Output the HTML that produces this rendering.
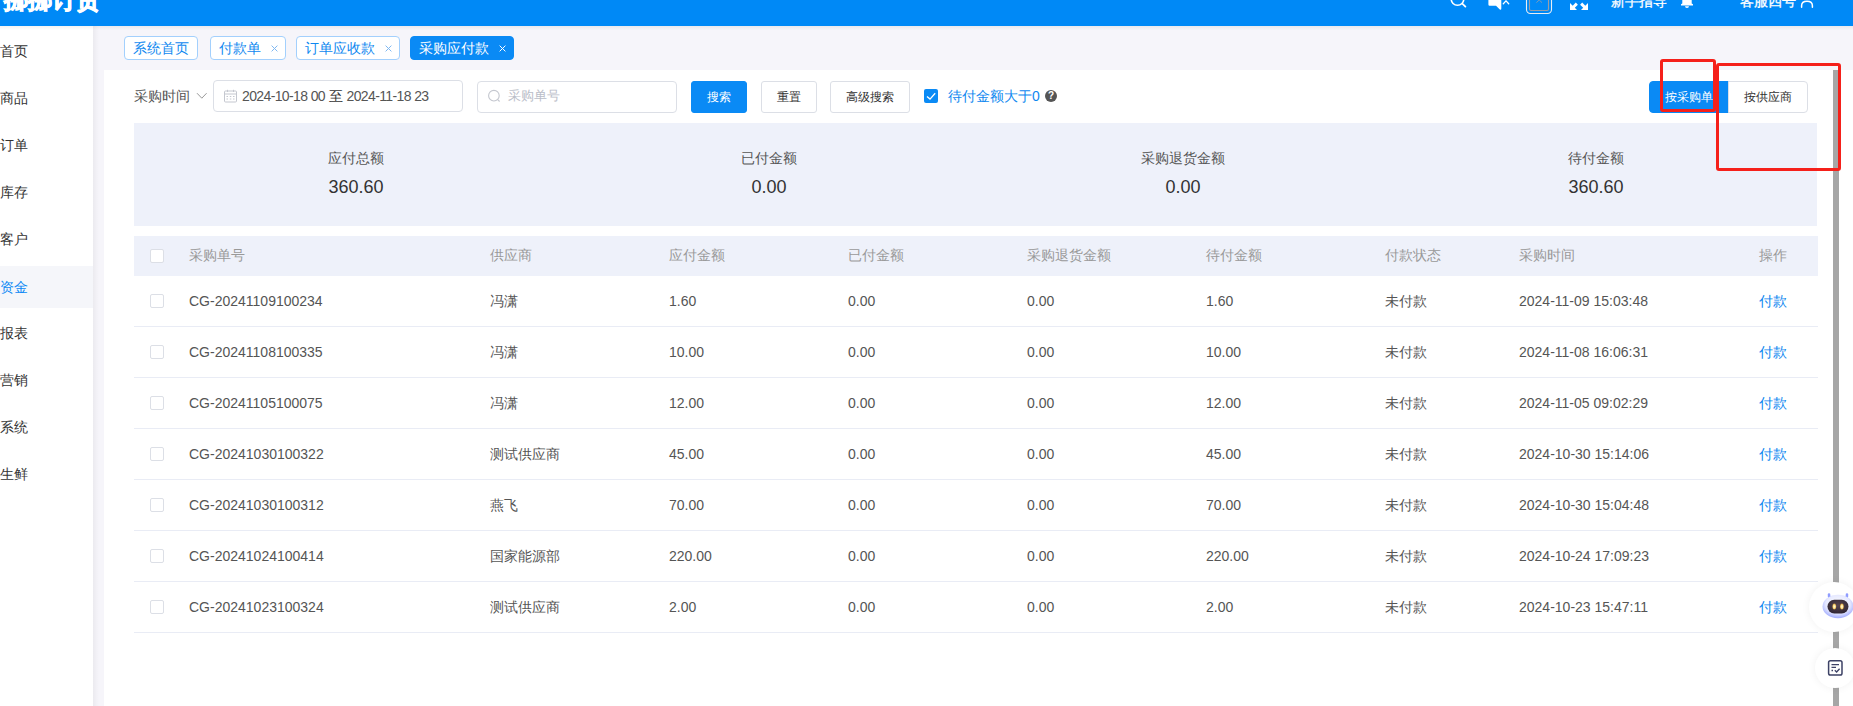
<!DOCTYPE html>
<html><head><meta charset="utf-8">
<style>
*{margin:0;padding:0;box-sizing:border-box}
html,body{width:1853px;height:706px;overflow:hidden;background:#f6f5fa;font-family:"Liberation Sans",sans-serif;font-size:14px;color:#333}
.a{position:absolute;white-space:nowrap}
svg{position:absolute;overflow:visible}
#hdr{position:absolute;left:0;top:0;width:1853px;height:26px;background:#0089f6;overflow:hidden;z-index:3}
#hsh{position:absolute;left:0;top:26px;width:1853px;height:4px;background:linear-gradient(rgba(0,0,0,.05),rgba(0,0,0,0));z-index:2}
#side{position:absolute;left:0;top:26px;width:93px;height:680px;background:#fff;overflow:hidden}
#ssh{position:absolute;left:93px;top:26px;width:6px;height:680px;background:linear-gradient(90deg,rgba(0,0,0,.045),rgba(0,0,0,0))}
.si{position:absolute;left:0;width:93px;height:42px;line-height:42px;font-size:14px;color:#333}
.si span{position:absolute;left:0px}
.si.on{background:#f5f6fa;color:#0a88f5}
.tag{position:absolute;top:36px;height:24px;border:1px solid #a3d0fd;border-radius:4px;background:#fff;color:#0e88f0;font-size:14px;line-height:22px;padding-left:8px}
.tag .x{position:absolute;top:0;font-size:11px;color:#6aaef5}
.tag.on{background:#0a8af5;border-color:#0a8af5;color:#fff}
.tag.on .x{color:#fff}
#card{position:absolute;left:104px;top:70px;width:1749px;height:636px;background:#fff}
.inp{position:absolute;border:1px solid #dcdfe6;border-radius:4px;background:#fff}
.btn{position:absolute;top:81px;height:32px;border:1px solid #dcdfe6;border-radius:3px;background:#fff;font-size:12px;color:#333;text-align:center;line-height:30px}
.btn.p{background:#0a8af5;border-color:#0a8af5;color:#fff}
#sum{position:absolute;left:134px;top:123px;width:1683px;height:103px;background:#eef1fa}
.sl{position:absolute;top:150px;width:414px;text-align:center;font-size:14px;color:#555}
.sv{position:absolute;top:177px;width:414px;text-align:center;font-size:18px;color:#333}
#th{position:absolute;left:134px;top:236px;width:1684px;height:40px;background:#eef1fa}
.hc{position:absolute;top:245px;font-size:14px;color:#999;line-height:20px}
.row{position:absolute;left:134px;width:1684px;height:51px;border-bottom:1px solid #e9ecf5}
.c{position:absolute;font-size:14px;color:#555;line-height:20px}
.cb{position:absolute;left:150px;width:14px;height:14px;border:1px solid #dcdfe6;border-radius:2px;background:#fff}
.lnk{color:#0a86f0}
.red{position:absolute;border:3px solid #f5201a;border-radius:3px;z-index:5}
</style></head><body>
<div id="hdr">
  <div class="a" style="left:4px;top:-15px;font-size:24px;font-weight:bold;color:#fff;line-height:30px;-webkit-text-stroke:0.9px #fff">挪挪订货</div>
  <!-- search icon -->
  <svg style="left:1445px;top:-10px" width="24" height="20" viewBox="0 0 24 20"><circle cx="12.5" cy="9" r="6.3" fill="none" stroke="#fff" stroke-width="1.6"/><path d="M17.3 13.6 L20.4 16.6" stroke="#fff" stroke-width="1.8" stroke-linecap="round"/></svg>
  <!-- speaker muted -->
  <svg style="left:1485px;top:-8px" width="28" height="20" viewBox="0 0 28 20"><path d="M3.4 0 H16.3 V16.5 Q16.3 18.2 14.8 17.6 L11 13.7 H4.6 Q3.4 13.7 3.4 12.5 Z" fill="#fff"/><path d="M18.3 11.8 L21 8.9 L23.7 11.8" fill="none" stroke="#fff" stroke-width="1.3" stroke-linecap="round"/></svg>
  <!-- box icon -->
  <svg style="left:1520px;top:-14px" width="40" height="30" viewBox="0 0 40 30"><rect x="6.5" y="0.5" width="25" height="27" rx="4" fill="none" stroke="#e8eef5" stroke-width="1.1"/><rect x="9.5" y="0.5" width="19" height="24" rx="1.5" fill="none" stroke="#9a9ea6" stroke-width="1.1"/><path d="M16.4 16.6 L19.2 14 L22 16.6" fill="none" stroke="#9a9ea6" stroke-width="0.8"/></svg>
  <!-- fullscreen -->
  <svg style="left:1568px;top:0px" width="22" height="12" viewBox="0 0 22 12"><path d="M2 3 V10 H9 L6.8 7.8 L9.9 4.7 L7.8 2.6 L4.7 5.7 Z" fill="#fff"/><path d="M20 3 V10 H13 L15.2 7.8 L12.1 4.7 L14.2 2.6 L17.3 5.7 Z" fill="#fff"/></svg>
  <div class="a" style="left:1611px;top:-9.5px;font-size:14px;color:#fff;line-height:20px;-webkit-text-stroke:0.3px #fff">新手指导</div>
  <!-- bell -->
  <svg style="left:1679px;top:-8px" width="16" height="18" viewBox="0 0 16 18"><path d="M3.3 4 Q3.3 0 8 0 Q12.7 0 12.7 4 V11.5 L14 12.2 V13.4 H2 V12.2 L3.3 11.5 Z" fill="#fff"/><path d="M6 14.2 H10 Q10 15.9 8 15.9 Q6 15.9 6 14.2Z" fill="#fff"/></svg>
  <div class="a" style="left:1740px;top:-9.5px;font-size:14px;color:#fff;line-height:20px;-webkit-text-stroke:0.3px #fff">客服四号</div>
  <!-- user -->
  <svg style="left:1799px;top:-9px" width="16" height="18" viewBox="0 0 16 18"><circle cx="8" cy="4" r="3.6" fill="none" stroke="#fff" stroke-width="1.4"/><path d="M2.6 16.2 V14.8 Q2.6 10.3 8 10.3 Q13.4 10.3 13.4 14.8 V16.2" fill="none" stroke="#fff" stroke-width="1.5" stroke-linecap="round"/></svg>
</div>
<div id="hsh"></div>
<div id="side">
  <div class="si" style="top:4px"><span>首页</span></div>
  <div class="si" style="top:51px"><span>商品</span></div>
  <div class="si" style="top:98px"><span>订单</span></div>
  <div class="si" style="top:145px"><span>库存</span></div>
  <div class="si" style="top:192px"><span>客户</span></div>
  <div class="si on" style="top:240px"><span>资金</span></div>
  <div class="si" style="top:286px"><span>报表</span></div>
  <div class="si" style="top:333px"><span>营销</span></div>
  <div class="si" style="top:380px"><span>系统</span></div>
  <div class="si" style="top:427px"><span>生鲜</span></div>
</div>
<div id="ssh"></div>
<div class="tag" style="left:124px;width:74px">系统首页</div>
<div class="tag" style="left:210px;width:76px">付款单</div><svg style="left:271.1px;top:44.5px" width="7" height="7" viewBox="0 0 7 7"><path d="M0.6 0.6 L6.4 6.4 M6.4 0.6 L0.6 6.4" stroke="#7fb8f2" stroke-width="1"/></svg>
<div class="tag" style="left:296px;width:104px">订单应收款</div><svg style="left:385.2px;top:44.5px" width="7" height="7" viewBox="0 0 7 7"><path d="M0.6 0.6 L6.4 6.4 M6.4 0.6 L0.6 6.4" stroke="#7fb8f2" stroke-width="1"/></svg>
<div class="tag on" style="left:410px;width:104px">采购应付款</div><svg style="left:499.0px;top:44.5px" width="7" height="7" viewBox="0 0 7 7"><path d="M0.6 0.6 L6.4 6.4 M6.4 0.6 L0.6 6.4" stroke="#ffffff" stroke-width="1"/></svg>

<div id="card"></div>
<div class="a" style="left:134px;top:86px;font-size:14px;color:#555;line-height:20px">采购时间</div>
<svg style="left:196px;top:92px" width="12" height="8" viewBox="0 0 12 8"><path d="M1 1.2 L5.8 6.2 L10.6 1.2" fill="none" stroke="#999" stroke-width="1"/></svg>
<div class="inp" style="left:213px;top:80px;width:250px;height:32px"></div>
<svg style="left:223px;top:88px" width="16" height="16" viewBox="0 0 16 16"><rect x="1.5" y="3" width="12" height="11" rx="1" fill="none" stroke="#c4c7cf" stroke-width="1"/><path d="M1.5 6 H13.5" stroke="#c4c7cf" stroke-width="1"/><path d="M4.5 1.8 V4 M10.5 1.8 V4" stroke="#c4c7cf" stroke-width="1"/><path d="M3.5 8.5 H5 M6.8 8.5 H8.3 M10 8.5 H11.5 M3.5 11 H5 M6.8 11 H8.3 M10 11 H11.5" stroke="#c4c7cf" stroke-width="1"/></svg>
<div class="a" style="left:242px;top:86px;font-size:14px;color:#555;line-height:20px;letter-spacing:-0.62px">2024-10-18 00</div>
<div class="a" style="left:329px;top:86px;font-size:14px;color:#333;line-height:20px">至</div>
<div class="a" style="left:346.5px;top:86px;font-size:14px;color:#555;line-height:20px;letter-spacing:-0.62px">2024-11-18 23</div>
<div class="inp" style="left:477px;top:81px;width:200px;height:32px"></div>
<svg style="left:486px;top:88px" width="16" height="16" viewBox="0 0 16 16"><circle cx="7.9" cy="7.7" r="5.3" fill="none" stroke="#c4c7cf" stroke-width="1.1"/><path d="M11.7 11.6 L13.6 13.5" stroke="#c4c7cf" stroke-width="1.1"/></svg>
<div class="a" style="left:508px;top:86px;font-size:13px;color:#b9bdc8;line-height:20px">采购单号</div>
<div class="btn p" style="left:691px;width:56px">搜索</div>
<div class="btn" style="left:761px;width:56px">重置</div>
<div class="btn" style="left:830px;width:80px">高级搜索</div>
<div class="a" style="left:924px;top:89px;width:14px;height:14px;background:#0a8af5;border-radius:2px"></div>
<svg style="left:924px;top:89px" width="14" height="14" viewBox="0 0 14 14"><path d="M3 7.4 L6 10.1 L11.2 4.3" fill="none" stroke="#fff" stroke-width="1.3"/></svg>
<div class="a" style="left:948px;top:86px;font-size:14px;color:#0e88f0;line-height:20px">待付金额大于0</div>
<div class="a" style="left:1045px;top:90px;width:12px;height:12px;border-radius:6px;background:#555;color:#fff;font-size:10px;font-weight:bold;line-height:12px;text-align:center">?</div>
<div class="btn p" style="left:1649px;width:80px;border-radius:4px 0 0 4px">按采购单</div>
<div class="btn" style="left:1728px;width:80px;border-radius:0 4px 4px 0">按供应商</div>

<div id="sum"></div>
<div class="sl" style="left:149px">应付总额</div>
<div class="sv" style="left:149px">360.60</div>
<div class="sl" style="left:562px">已付金额</div>
<div class="sv" style="left:562px">0.00</div>
<div class="sl" style="left:976px">采购退货金额</div>
<div class="sv" style="left:976px">0.00</div>
<div class="sl" style="left:1389px">待付金额</div>
<div class="sv" style="left:1389px">360.60</div>

<div id="th"></div>
<div class="cb" style="top:249px"></div>
<div class="hc" style="left:189px">采购单号</div>
<div class="hc" style="left:490px">供应商</div>
<div class="hc" style="left:669px">应付金额</div>
<div class="hc" style="left:848px">已付金额</div>
<div class="hc" style="left:1027px">采购退货金额</div>
<div class="hc" style="left:1206px">待付金额</div>
<div class="hc" style="left:1385px">付款状态</div>
<div class="hc" style="left:1519px">采购时间</div>
<div class="hc" style="left:1759px">操作</div>
<div class="row" style="top:276px"></div>
<div class="cb" style="top:294px"></div>
<div class="c" style="left:189px;top:291px">CG-20241109100234</div>
<div class="c" style="left:490px;top:291px">冯潇</div>
<div class="c" style="left:669px;top:291px">1.60</div>
<div class="c" style="left:848px;top:291px">0.00</div>
<div class="c" style="left:1027px;top:291px">0.00</div>
<div class="c" style="left:1206px;top:291px">1.60</div>
<div class="c" style="left:1385px;top:291px">未付款</div>
<div class="c" style="left:1519px;top:291px">2024-11-09 15:03:48</div>
<div class="c lnk" style="left:1759px;top:291px">付款</div>
<div class="row" style="top:327px"></div>
<div class="cb" style="top:345px"></div>
<div class="c" style="left:189px;top:342px">CG-20241108100335</div>
<div class="c" style="left:490px;top:342px">冯潇</div>
<div class="c" style="left:669px;top:342px">10.00</div>
<div class="c" style="left:848px;top:342px">0.00</div>
<div class="c" style="left:1027px;top:342px">0.00</div>
<div class="c" style="left:1206px;top:342px">10.00</div>
<div class="c" style="left:1385px;top:342px">未付款</div>
<div class="c" style="left:1519px;top:342px">2024-11-08 16:06:31</div>
<div class="c lnk" style="left:1759px;top:342px">付款</div>
<div class="row" style="top:378px"></div>
<div class="cb" style="top:396px"></div>
<div class="c" style="left:189px;top:393px">CG-20241105100075</div>
<div class="c" style="left:490px;top:393px">冯潇</div>
<div class="c" style="left:669px;top:393px">12.00</div>
<div class="c" style="left:848px;top:393px">0.00</div>
<div class="c" style="left:1027px;top:393px">0.00</div>
<div class="c" style="left:1206px;top:393px">12.00</div>
<div class="c" style="left:1385px;top:393px">未付款</div>
<div class="c" style="left:1519px;top:393px">2024-11-05 09:02:29</div>
<div class="c lnk" style="left:1759px;top:393px">付款</div>
<div class="row" style="top:429px"></div>
<div class="cb" style="top:447px"></div>
<div class="c" style="left:189px;top:444px">CG-20241030100322</div>
<div class="c" style="left:490px;top:444px">测试供应商</div>
<div class="c" style="left:669px;top:444px">45.00</div>
<div class="c" style="left:848px;top:444px">0.00</div>
<div class="c" style="left:1027px;top:444px">0.00</div>
<div class="c" style="left:1206px;top:444px">45.00</div>
<div class="c" style="left:1385px;top:444px">未付款</div>
<div class="c" style="left:1519px;top:444px">2024-10-30 15:14:06</div>
<div class="c lnk" style="left:1759px;top:444px">付款</div>
<div class="row" style="top:480px"></div>
<div class="cb" style="top:498px"></div>
<div class="c" style="left:189px;top:495px">CG-20241030100312</div>
<div class="c" style="left:490px;top:495px">燕飞</div>
<div class="c" style="left:669px;top:495px">70.00</div>
<div class="c" style="left:848px;top:495px">0.00</div>
<div class="c" style="left:1027px;top:495px">0.00</div>
<div class="c" style="left:1206px;top:495px">70.00</div>
<div class="c" style="left:1385px;top:495px">未付款</div>
<div class="c" style="left:1519px;top:495px">2024-10-30 15:04:48</div>
<div class="c lnk" style="left:1759px;top:495px">付款</div>
<div class="row" style="top:531px"></div>
<div class="cb" style="top:549px"></div>
<div class="c" style="left:189px;top:546px">CG-20241024100414</div>
<div class="c" style="left:490px;top:546px">国家能源部</div>
<div class="c" style="left:669px;top:546px">220.00</div>
<div class="c" style="left:848px;top:546px">0.00</div>
<div class="c" style="left:1027px;top:546px">0.00</div>
<div class="c" style="left:1206px;top:546px">220.00</div>
<div class="c" style="left:1385px;top:546px">未付款</div>
<div class="c" style="left:1519px;top:546px">2024-10-24 17:09:23</div>
<div class="c lnk" style="left:1759px;top:546px">付款</div>
<div class="row" style="top:582px"></div>
<div class="cb" style="top:600px"></div>
<div class="c" style="left:189px;top:597px">CG-20241023100324</div>
<div class="c" style="left:490px;top:597px">测试供应商</div>
<div class="c" style="left:669px;top:597px">2.00</div>
<div class="c" style="left:848px;top:597px">0.00</div>
<div class="c" style="left:1027px;top:597px">0.00</div>
<div class="c" style="left:1206px;top:597px">2.00</div>
<div class="c" style="left:1385px;top:597px">未付款</div>
<div class="c" style="left:1519px;top:597px">2024-10-23 15:47:11</div>
<div class="c lnk" style="left:1759px;top:597px">付款</div>
<div class="a" style="left:1833px;top:70px;width:6px;height:636px;background:#a6a6a6"></div>
<!-- floating buttons -->
<div class="a" style="left:1809px;top:582px;width:50px;height:50px;border-radius:25px;background:#fff;box-shadow:0 0 8px rgba(0,0,0,.06)"></div>
<svg style="left:1821px;top:592px" width="34" height="28" viewBox="0 0 34 28">
 <defs><radialGradient id="hg" cx="50%" cy="40%" r="65%"><stop offset="0" stop-color="#ffffff"/><stop offset="0.6" stop-color="#e6e9ff"/><stop offset="1" stop-color="#8f9cff"/></radialGradient>
 <radialGradient id="fg" cx="50%" cy="40%" r="70%"><stop offset="0" stop-color="#5a4650"/><stop offset="1" stop-color="#2a2230"/></radialGradient>
 <radialGradient id="eg" cx="50%" cy="50%" r="50%"><stop offset="0" stop-color="#fffbe8"/><stop offset="0.6" stop-color="#ffe08a"/><stop offset="1" stop-color="#c9933a"/></radialGradient></defs>
 <path d="M8 2.5 Q7.5 4.5 9.5 6.5 M26 2.5 Q26.5 4.5 24.5 6.5" stroke="#8f9cff" stroke-width="2.6" stroke-linecap="round" fill="none"/>
 <ellipse cx="17" cy="14.5" rx="15.5" ry="11.8" fill="url(#hg)"/>
 <rect x="6.5" y="7.8" width="21" height="13.6" rx="6.8" fill="url(#fg)"/>
 <ellipse cx="13.3" cy="14.6" rx="1.9" ry="3" fill="url(#eg)"/>
 <ellipse cx="20.9" cy="14.6" rx="1.9" ry="3" fill="url(#eg)"/>
</svg>
<div class="a" style="left:1815px;top:648px;width:40px;height:40px;border-radius:20px;background:#fff;box-shadow:0 0 8px rgba(0,0,0,.06)"></div>
<svg style="left:1826px;top:659px" width="18" height="18" viewBox="0 0 18 18"><rect x="2.6" y="1.8" width="13.4" height="14.2" rx="1.8" fill="none" stroke="#3d4266" stroke-width="1.5"/><path d="M5.5 5.6 H13 M5.5 8.4 H10 M5.5 11.5 H7" stroke="#3d4266" stroke-width="1.3"/><path d="M8.8 11.3 L10.6 13 L13.6 9.7" fill="none" stroke="#3d4266" stroke-width="1.3"/></svg>
<!-- red annotation boxes -->
<div class="red" style="left:1660px;top:59px;width:56px;height:53px"></div>
<div class="red" style="left:1716px;top:63px;width:125px;height:108px"></div>
</body></html>
